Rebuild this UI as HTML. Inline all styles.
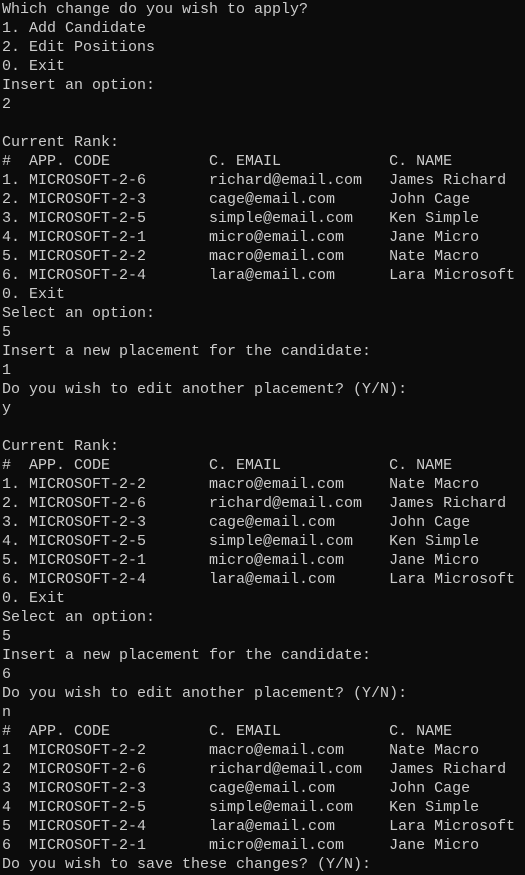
<!DOCTYPE html>
<html><head><meta charset="utf-8"><style>
html,body{margin:0;padding:0;background:#0c0c0c;width:525px;height:875px;overflow:hidden}
pre{margin:0;padding:0 0 0 2px;color:#cccccc;font-family:"Liberation Mono","DejaVu Sans Mono",monospace;font-size:15px;line-height:19px}
</style></head><body><pre>Which change do you wish to apply?
1. Add Candidate
2. Edit Positions
0. Exit
Insert an option:
2

Current Rank:
#  APP. CODE           C. EMAIL            C. NAME
1. MICROSOFT-2-6       richard@email.com   James Richard
2. MICROSOFT-2-3       cage@email.com      John Cage
3. MICROSOFT-2-5       simple@email.com    Ken Simple
4. MICROSOFT-2-1       micro@email.com     Jane Micro
5. MICROSOFT-2-2       macro@email.com     Nate Macro
6. MICROSOFT-2-4       lara@email.com      Lara Microsoft
0. Exit
Select an option:
5
Insert a new placement for the candidate:
1
Do you wish to edit another placement? (Y/N):
y

Current Rank:
#  APP. CODE           C. EMAIL            C. NAME
1. MICROSOFT-2-2       macro@email.com     Nate Macro
2. MICROSOFT-2-6       richard@email.com   James Richard
3. MICROSOFT-2-3       cage@email.com      John Cage
4. MICROSOFT-2-5       simple@email.com    Ken Simple
5. MICROSOFT-2-1       micro@email.com     Jane Micro
6. MICROSOFT-2-4       lara@email.com      Lara Microsoft
0. Exit
Select an option:
5
Insert a new placement for the candidate:
6
Do you wish to edit another placement? (Y/N):
n
#  APP. CODE           C. EMAIL            C. NAME
1  MICROSOFT-2-2       macro@email.com     Nate Macro
2  MICROSOFT-2-6       richard@email.com   James Richard
3  MICROSOFT-2-3       cage@email.com      John Cage
4  MICROSOFT-2-5       simple@email.com    Ken Simple
5  MICROSOFT-2-4       lara@email.com      Lara Microsoft
6  MICROSOFT-2-1       micro@email.com     Jane Micro
Do you wish to save these changes? (Y/N):</pre></body></html>
